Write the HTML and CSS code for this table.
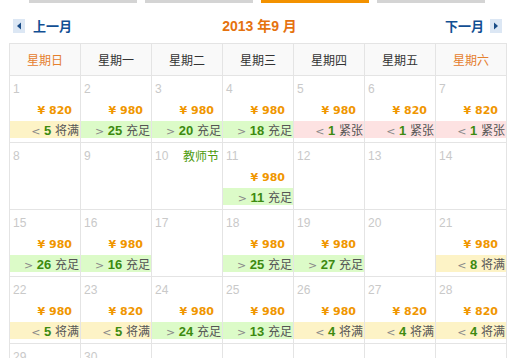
FILE: index.html
```html
<!DOCTYPE html>
<html lang="zh-CN">
<head>
<meta charset="utf-8">
<title>2013年9月 价格日历</title>
<link rel="stylesheet" href="styles.css">
</head>
<body>
<div class="tabs">
  <span class="tab"></span>
  <span class="tab"></span>
  <span class="tab active"></span>
  <span class="tab"></span>
</div>
<div class="nav">
  <a class="navlink prev"><span class="ico"><svg width="12" height="14" viewBox="0 0 12 14"><path d="M8 3.5 L4 7 L8 10.5 Z" fill="#1a4d87"/></svg></span>上一月</a>
  <div class="title">2013 年9 月</div>
  <a class="navlink next">下一月<span class="ico"><svg width="12" height="14" viewBox="0 0 12 14"><path d="M4 3.5 L8 7 L4 10.5 Z" fill="#1a4d87"/></svg></span></a>
</div>
<div class="cal">
  <div class="hd wk">星期日</div>
  <div class="hd">星期一</div>
  <div class="hd">星期二</div>
  <div class="hd">星期三</div>
  <div class="hd">星期四</div>
  <div class="hd">星期五</div>
  <div class="hd wk">星期六</div>

  <div class="cell"><div class="top"><span class="d">1</span></div><div class="price">¥ 820</div><div class="st few"><span class="op">&lt;</span> <b>5</b> 将满</div></div>
  <div class="cell"><div class="top"><span class="d">2</span></div><div class="price">¥ 980</div><div class="st ok"><span class="op">&gt;</span> <b>25</b> 充足</div></div>
  <div class="cell"><div class="top"><span class="d">3</span></div><div class="price">¥ 980</div><div class="st ok"><span class="op">&gt;</span> <b>20</b> 充足</div></div>
  <div class="cell"><div class="top"><span class="d">4</span></div><div class="price">¥ 980</div><div class="st ok"><span class="op">&gt;</span> <b>18</b> 充足</div></div>
  <div class="cell"><div class="top"><span class="d">5</span></div><div class="price">¥ 980</div><div class="st tight"><span class="op">&lt;</span> <b>1</b> 紧张</div></div>
  <div class="cell"><div class="top"><span class="d">6</span></div><div class="price">¥ 820</div><div class="st tight"><span class="op">&lt;</span> <b>1</b> 紧张</div></div>
  <div class="cell"><div class="top"><span class="d">7</span></div><div class="price">¥ 820</div><div class="st tight"><span class="op">&lt;</span> <b>1</b> 紧张</div></div>

  <div class="cell"><div class="top"><span class="d">8</span></div></div>
  <div class="cell"><div class="top"><span class="d">9</span></div></div>
  <div class="cell"><div class="top"><span class="d">10</span><span class="hol">教师节</span></div></div>
  <div class="cell"><div class="top"><span class="d">11</span></div><div class="price">¥ 980</div><div class="st ok"><span class="op">&gt;</span> <b>11</b> 充足</div></div>
  <div class="cell"><div class="top"><span class="d">12</span></div></div>
  <div class="cell"><div class="top"><span class="d">13</span></div></div>
  <div class="cell"><div class="top"><span class="d">14</span></div></div>

  <div class="cell"><div class="top"><span class="d">15</span></div><div class="price">¥ 980</div><div class="st ok"><span class="op">&gt;</span> <b>26</b> 充足</div></div>
  <div class="cell"><div class="top"><span class="d">16</span></div><div class="price">¥ 980</div><div class="st ok"><span class="op">&gt;</span> <b>16</b> 充足</div></div>
  <div class="cell"><div class="top"><span class="d">17</span></div></div>
  <div class="cell"><div class="top"><span class="d">18</span></div><div class="price">¥ 980</div><div class="st ok"><span class="op">&gt;</span> <b>25</b> 充足</div></div>
  <div class="cell"><div class="top"><span class="d">19</span></div><div class="price">¥ 980</div><div class="st ok"><span class="op">&gt;</span> <b>27</b> 充足</div></div>
  <div class="cell"><div class="top"><span class="d">20</span></div></div>
  <div class="cell"><div class="top"><span class="d">21</span></div><div class="price">¥ 980</div><div class="st few"><span class="op">&lt;</span> <b>8</b> 将满</div></div>

  <div class="cell"><div class="top"><span class="d">22</span></div><div class="price">¥ 980</div><div class="st few"><span class="op">&lt;</span> <b>5</b> 将满</div></div>
  <div class="cell"><div class="top"><span class="d">23</span></div><div class="price">¥ 820</div><div class="st few"><span class="op">&lt;</span> <b>5</b> 将满</div></div>
  <div class="cell"><div class="top"><span class="d">24</span></div><div class="price">¥ 980</div><div class="st ok"><span class="op">&gt;</span> <b>24</b> 充足</div></div>
  <div class="cell"><div class="top"><span class="d">25</span></div><div class="price">¥ 980</div><div class="st ok"><span class="op">&gt;</span> <b>13</b> 充足</div></div>
  <div class="cell"><div class="top"><span class="d">26</span></div><div class="price">¥ 980</div><div class="st few"><span class="op">&lt;</span> <b>4</b> 将满</div></div>
  <div class="cell"><div class="top"><span class="d">27</span></div><div class="price">¥ 820</div><div class="st few"><span class="op">&lt;</span> <b>4</b> 将满</div></div>
  <div class="cell"><div class="top"><span class="d">28</span></div><div class="price">¥ 820</div><div class="st few"><span class="op">&lt;</span> <b>4</b> 将满</div></div>

  <div class="cell"><div class="top"><span class="d">29</span></div></div>
  <div class="cell"><div class="top"><span class="d">30</span></div></div>
  <div class="cell"></div>
  <div class="cell"></div>
  <div class="cell"></div>
  <div class="cell"></div>
  <div class="cell"></div>
</div>
</body>
</html>
```

FILE: styles.css
```css
html, body {
  margin: 0;
  padding: 0;
  background: #fff;
}
body {
  width: 514px;
  height: 358px;
  overflow: hidden;
  font-family: "Liberation Sans", "Noto Sans CJK SC", sans-serif;
  font-size: 12px;
  color: #333;
}
.tabs {
  display: flex;
  gap: 8px;
  padding-left: 29px;
  height: 3px;
}
.tab {
  width: 108px;
  height: 3px;
  background: #d4d4d4;
}
.tab.active {
  background: #f39200;
}
.nav {
  height: 40px;
  display: flex;
  align-items: center;
  justify-content: space-between;
  padding: 6px 12px 0 13px;
  box-sizing: border-box;
  width: 514px;
}
.navlink {
  display: flex;
  align-items: center;
  gap: 8px;
  color: #124f93;
  font-weight: bold;
  font-size: 13px;
  line-height: 14px;
  font-family: "Noto Sans CJK SC", sans-serif;
}
.next { gap: 6px; }
.ico {
  display: block;
  width: 12px;
  height: 14px;
  background: #dce7f4;
}
.ico svg { display: block; }
.title {
  color: #e5720f;
  font-weight: bold;
  font-size: 14px;
  line-height: 16px;
  margin-left: 2px;
  font-family: "Liberation Sans", "Noto Sans CJK SC", sans-serif;
}
.cal {
  margin-left: 9px;
  width: 498px;
  display: grid;
  grid-template-columns: repeat(7, 70px);
  grid-template-rows: 31px repeat(5, 66px);
  gap: 1px;
  padding: 1px;
  box-sizing: border-box;
  background: #e4e4e4;
}
.hd {
  background: #f9f9f9;
  display: flex;
  align-items: center;
  justify-content: center;
  font-family: "Noto Sans CJK SC", sans-serif;
  font-size: 12px;
  color: #333;
}
.hd.wk { color: #e5802e; }
.cell {
  background: #fff;
  display: flex;
  flex-direction: column;
  padding-bottom: 4px;
  box-sizing: border-box;
}
.top {
  display: flex;
  justify-content: space-between;
  align-items: center;
  padding: 6px 3px 0 3px;
  height: 14px;
}
.d {
  color: #c9c9c9;
  font-size: 12px;
  line-height: 14px;
  font-family: "Liberation Sans", sans-serif;
}
.hol {
  color: #4d9a0c;
  font-family: "Noto Sans CJK SC", sans-serif;
  font-size: 12px;
  line-height: 14px;
}
.price {
  margin-top: auto;
  text-align: right;
  padding-right: 8px;
  color: #f09600;
  font-weight: bold;
  font-size: 11px;
  line-height: 14px;
  font-family: "DejaVu Sans", sans-serif;
  margin-bottom: 3px;
}
.st {
  height: 17px;
  line-height: 17px;
  text-align: right;
  padding-right: 1px;
  font-family: "Noto Sans CJK SC", sans-serif;
  font-size: 12px;
  color: #555;
  word-spacing: 1px;
}
.st .op { color: #888; font-family: "DejaVu Sans", sans-serif; font-size: 11px; }
.st b {
  color: #3d8a10;
  font-family: "Liberation Sans", sans-serif;
  font-size: 13px;
}
.st.few { background: #fdf3c6; }
.st.ok { background: #dcfbc8; }
.st.tight { background: #fde2e2; }
```
